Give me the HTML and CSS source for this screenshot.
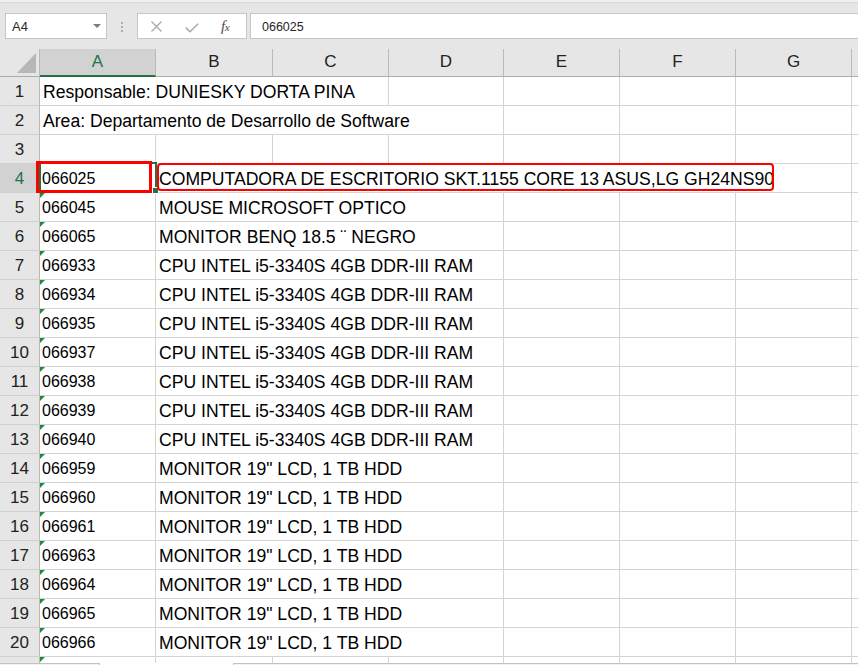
FILE: index.html
```html
<!DOCTYPE html>
<html lang="es">
<head>
<meta charset="utf-8">
<title>Hoja de cálculo</title>
<link rel="stylesheet" href="styles.css">
</head>
<body>
<div class="app">
  <div class="topline"></div>
  <div class="toolbar">
    <div class="namebox"><span>A4</span><span class="caret"></span></div>
    <div class="grip"><i></i><i></i><i></i></div>
    <div class="fxbtns">
      <svg class="ico-x" width="11" height="11" viewBox="0 0 11 11"><path d="M0.5 0.5L10.5 10.5M10.5 0.5L0.5 10.5" stroke="#a9a9a9" stroke-width="1.3" fill="none"/></svg>
      <svg class="ico-ok" width="14" height="10" viewBox="0 0 14 10"><path d="M0.8 4.6L5 8.8L13.2 0.8" stroke="#a9a9a9" stroke-width="1.5" fill="none"/></svg>
      <span class="fx">f<span class="fxx">x</span></span>
    </div>
    <div class="finput">066025</div>
  </div>
  <div class="sheet">
    <div class="ch corner"><svg width="39" height="27" viewBox="0 0 39 27"><polygon points="36,4 36,24 17,24" fill="#b7b7b7"/></svg></div>
    <div class="ch sel">A</div><div class="ch">B</div><div class="ch">C</div><div class="ch">D</div><div class="ch">E</div><div class="ch">F</div><div class="ch">G</div><div class="ch"></div>

    <div class="rh">1</div><div class="c s3">Responsable: DUNIESKY DORTA PINA</div><div class="c"></div><div class="c"></div><div class="c"></div><div class="c"></div><div class="c"></div>
    <div class="rh">2</div><div class="c s4">Area: Departamento de Desarrollo de Software</div><div class="c"></div><div class="c"></div><div class="c"></div><div class="c"></div>
    <div class="rh">3</div><div class="c"></div><div class="c"></div><div class="c"></div><div class="c"></div><div class="c"></div><div class="c"></div><div class="c"></div><div class="c"></div>
    <div class="rh sel">4</div><div class="c n">066025</div><div class="c s6">COMPUTADORA DE ESCRITORIO SKT.1155 CORE 13 ASUS,LG GH24NS90</div><div class="c"></div>
    <div class="rh">5</div><div class="c n tri">066045</div><div class="c s3">MOUSE MICROSOFT OPTICO</div><div class="c"></div><div class="c"></div><div class="c"></div><div class="c"></div>
    <div class="rh">6</div><div class="c n tri">066065</div><div class="c s3">MONITOR BENQ 18.5 ¨ NEGRO</div><div class="c"></div><div class="c"></div><div class="c"></div><div class="c"></div>
    <div class="rh">7</div><div class="c n tri">066933</div><div class="c s3">CPU INTEL i5-3340S 4GB DDR-III RAM</div><div class="c"></div><div class="c"></div><div class="c"></div><div class="c"></div>
    <div class="rh">8</div><div class="c n tri">066934</div><div class="c s3">CPU INTEL i5-3340S 4GB DDR-III RAM</div><div class="c"></div><div class="c"></div><div class="c"></div><div class="c"></div>
    <div class="rh">9</div><div class="c n tri">066935</div><div class="c s3">CPU INTEL i5-3340S 4GB DDR-III RAM</div><div class="c"></div><div class="c"></div><div class="c"></div><div class="c"></div>
    <div class="rh">10</div><div class="c n tri">066937</div><div class="c s3">CPU INTEL i5-3340S 4GB DDR-III RAM</div><div class="c"></div><div class="c"></div><div class="c"></div><div class="c"></div>
    <div class="rh">11</div><div class="c n tri">066938</div><div class="c s3">CPU INTEL i5-3340S 4GB DDR-III RAM</div><div class="c"></div><div class="c"></div><div class="c"></div><div class="c"></div>
    <div class="rh">12</div><div class="c n tri">066939</div><div class="c s3">CPU INTEL i5-3340S 4GB DDR-III RAM</div><div class="c"></div><div class="c"></div><div class="c"></div><div class="c"></div>
    <div class="rh">13</div><div class="c n tri">066940</div><div class="c s3">CPU INTEL i5-3340S 4GB DDR-III RAM</div><div class="c"></div><div class="c"></div><div class="c"></div><div class="c"></div>
    <div class="rh">14</div><div class="c n tri">066959</div><div class="c s3">MONITOR 19" LCD, 1 TB HDD</div><div class="c"></div><div class="c"></div><div class="c"></div><div class="c"></div>
    <div class="rh">15</div><div class="c n tri">066960</div><div class="c s3">MONITOR 19" LCD, 1 TB HDD</div><div class="c"></div><div class="c"></div><div class="c"></div><div class="c"></div>
    <div class="rh">16</div><div class="c n tri">066961</div><div class="c s3">MONITOR 19" LCD, 1 TB HDD</div><div class="c"></div><div class="c"></div><div class="c"></div><div class="c"></div>
    <div class="rh">17</div><div class="c n tri">066963</div><div class="c s3">MONITOR 19" LCD, 1 TB HDD</div><div class="c"></div><div class="c"></div><div class="c"></div><div class="c"></div>
    <div class="rh">18</div><div class="c n tri">066964</div><div class="c s3">MONITOR 19" LCD, 1 TB HDD</div><div class="c"></div><div class="c"></div><div class="c"></div><div class="c"></div>
    <div class="rh">19</div><div class="c n tri">066965</div><div class="c s3">MONITOR 19" LCD, 1 TB HDD</div><div class="c"></div><div class="c"></div><div class="c"></div><div class="c"></div>
    <div class="rh">20</div><div class="c n tri">066966</div><div class="c s3">MONITOR 19" LCD, 1 TB HDD</div><div class="c"></div><div class="c"></div><div class="c"></div><div class="c"></div>
    <div class="rh"></div><div class="c n tri"></div><div class="c"></div><div class="c"></div><div class="c"></div><div class="c"></div><div class="c"></div><div class="c"></div><div class="c"></div>

    <div class="selbox"></div>
    <div class="handle"></div>
    <div class="mark mark-a"></div>
    <div class="mark mark-b"></div>
  </div>
  <div class="tabs">
    <div class="tab-l"></div>
    <div class="tab-act"></div>
    <div class="tab-r"></div>
  </div>
</div>
</body>
</html>
```

FILE: styles.css
```css
* { box-sizing: border-box; }

body {
  margin: 0;
  background: #ffffff;
  font-family: "Liberation Sans", Arial, sans-serif;
}

.app {
  width: 858px;
  height: 665px;
  overflow: hidden;
  background: #e6e6e6;
  display: flex;
  flex-direction: column;
}

.topline {
  flex: none;
  height: 3px;
  background: #f0f0f0;
  border-bottom: 1px solid #d6d6d6;
}

.toolbar {
  flex: none;
  height: 46px;
  display: flex;
  align-items: flex-start;
  padding-top: 10px;
}

.namebox {
  margin-left: 5px;
  width: 102px;
  height: 26px;
  background: #fff;
  border: 1px solid #c6c6c6;
  display: flex;
  align-items: center;
  justify-content: space-between;
  padding: 1px 5px 0 6px;
  font-size: 13px;
  color: #262626;
}

.caret {
  width: 0;
  height: 0;
  border-left: 4px solid transparent;
  border-right: 4px solid transparent;
  border-top: 4px solid #7b7b7b;
  margin-top: -2px;
}

.grip {
  width: 30px;
  height: 26px;
  display: flex;
  flex-direction: column;
  align-items: center;
  justify-content: center;
  gap: 2px;
  padding-top: 2px;
}

.grip i {
  display: block;
  width: 2px;
  height: 2px;
  background: #adadad;
}

.fxbtns {
  width: 110px;
  height: 26px;
  background: #fff;
  border: 1px solid #c6c6c6;
  display: flex;
  align-items: center;
  padding-left: 13px;
}

.ico-x { margin-top: 1px; }

.ico-ok {
  margin-left: 23px;
  margin-top: 3px;
}

.fx {
  margin-left: 22px;
  font-family: "Liberation Serif", "Times New Roman", serif;
  font-style: italic;
  font-size: 15px;
  color: #4a4a4a;
  letter-spacing: -0.5px;
}

.fxx { font-size: 11px; }

.finput {
  flex: 1;
  margin-left: 3px;
  margin-right: -2px;
  height: 26px;
  background: #fff;
  border: 1px solid #c6c6c6;
  padding: 1px 0 0 11px;
  display: flex;
  align-items: center;
  font-size: 12.5px;
  color: #262626;
}

.sheet {
  flex: none;
  height: 614px;
  position: relative;
  overflow: hidden;
  background: #fff;
  display: grid;
  grid-template-columns: 40px 116px 117px 116px 115px 116px 116px 116px 116px;
  grid-template-rows: 28px;
  grid-auto-rows: 29px;
}

.ch {
  background: #e6e6e6;
  border-right: 1px solid #b9b9b9;
  border-bottom: 1px solid #ababab;
  text-align: center;
  font-size: 17px;
  line-height: 20px;
  padding-top: 3px;
  color: #222;
}

.ch.corner { padding: 0; }
.ch.corner svg { display: block; }

.ch.sel {
  background: #d2d2d2;
  color: #217346;
  border-bottom: 2px solid #217346;
}

.rh {
  background: #e6e6e6;
  border-right: 1px solid #b9b9b9;
  border-bottom: 1px solid #d0d0d0;
  text-align: center;
  font-size: 17px;
  line-height: 20px;
  padding-top: 5px;
  color: #222;
}

.rh.sel {
  background: #d2d2d2;
  color: #217346;
}

.c {
  position: relative;
  border-right: 1px solid #d4d4d4;
  border-bottom: 1px solid #d4d4d4;
  white-space: nowrap;
  font-size: 17.6px;
  line-height: 20px;
  padding: 5px 0 0 3px;
  color: #000;
}

.c.n {
  font-size: 16px;
  padding-left: 2px;
}

.s3 { grid-column: span 3; }
.s4 { grid-column: span 4; }
.s6 { grid-column: span 6; }

.tri::before {
  content: "";
  position: absolute;
  left: 0;
  top: 0;
  border-top: 5px solid #1d8b3b;
  border-right: 5px solid transparent;
}

.selbox {
  position: absolute;
  left: 39px;
  top: 113px;
  width: 118px;
  height: 31px;
  border: 2px solid #217346;
}

.handle {
  position: absolute;
  left: 152px;
  top: 138px;
  width: 7px;
  height: 7px;
  background: #217346;
  border: 1px solid #fff;
}

.mark {
  position: absolute;
  border: 2px solid #ff0000;
}

.mark-a {
  left: 36px;
  top: 112px;
  width: 116px;
  height: 32px;
  border-width: 3px;
}

.mark-b {
  left: 157px;
  top: 114px;
  width: 617px;
  height: 28px;
  border-radius: 4px;
}

.tabs {
  flex: 1;
  display: flex;
  background: #f3f3f3;
}

.tab-l {
  width: 100px;
  border-top: 1px solid #c2c2c2;
  border-right: 1px solid #c2c2c2;
}

.tab-act {
  width: 133px;
  background: #fff;
}

.tab-r {
  flex: 1;
  border-top: 1px solid #c2c2c2;
  border-left: 1px solid #c2c2c2;
}
```
